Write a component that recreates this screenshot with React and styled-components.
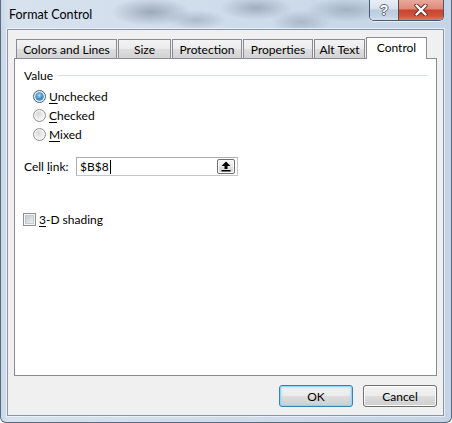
import React from "react";
import styled, { createGlobalStyle } from "styled-components";

const GlobalStyle = createGlobalStyle`
  html, body {
    margin: 0;
    padding: 0;
  }
  body {
    width: 452px;
    height: 423px;
    overflow: hidden;
    background: #ffffff;
    font-family: Lato, "Liberation Sans", sans-serif;
    font-size: 12px;
    color: #000000;
  }
`;

const Window = styled.div`
  box-sizing: border-box;
  width: 452px;
  height: 423px;
  display: flex;
  flex-direction: column;
  padding: 0 7px 6px 6px;
  border: 1px solid #5a6b80;
  border-top: none;
  border-radius: 0 0 6px 6px;
  background:
    radial-gradient(ellipse 40px 14px at 150px 12px, rgba(90, 105, 125, 0.45), transparent),
    radial-gradient(ellipse 30px 10px at 195px 20px, rgba(90, 105, 125, 0.3), transparent),
    radial-gradient(ellipse 36px 12px at 255px 8px, rgba(90, 105, 125, 0.4), transparent),
    radial-gradient(ellipse 30px 12px at 300px 22px, rgba(90, 105, 125, 0.3), transparent),
    radial-gradient(ellipse 40px 12px at 345px 10px, rgba(90, 105, 125, 0.35), transparent),
    linear-gradient(to right, #c9d7e7 0, #d7e2ee 8px, #cddbea 60%, #c4d4e6 100%);
`;

const TitleBar = styled.div`
  height: 29px;
  flex: none;
  display: flex;
  align-items: flex-start;
`;

const Title = styled.div`
  padding: 7px 0 0 2px;
  font-size: 12.5px;
  line-height: 15px;
  color: #000000;
`;

const CaptionGroup = styled.div`
  margin-left: auto;
  display: flex;
  height: 20px;
  border: 1px solid #4a5a6e;
  border-top: none;
  border-radius: 0 0 5px 5px;
  overflow: hidden;
  box-shadow: 0 1px 0 rgba(255, 255, 255, 0.6);
`;

const CaptionButton = styled.div`
  width: ${(p) => p.width}px;
  height: 20px;
  display: flex;
  align-items: center;
  justify-content: center;
  box-sizing: border-box;
  border-left: ${(p) => (p.first ? "none" : "1px solid #5b4848")};
  background: ${(p) =>
    p.danger
      ? "linear-gradient(to bottom, #e9a99b 0%, #dd8a78 45%, #c8432d 50%, #d0553c 80%, #e07a5c 100%)"
      : "linear-gradient(to bottom, #e8eef6 0%, #d7e1ed 45%, #bccbdc 50%, #c3d3e4 80%, #d3e0ee 100%)"};
  font-family: "Liberation Sans", sans-serif;
  font-weight: bold;
  font-size: 14px;
  color: #ffffff;
  text-shadow: -1px 0 #5d6b7a, 1px 0 #5d6b7a, 0 -1px #5d6b7a, 0 1px #5d6b7a;
`;

const Client = styled.div`
  flex: 1;
  box-sizing: border-box;
  display: flex;
  flex-direction: column;
  padding: 7px 6px 8px 6px;
  background: #f0f0f0;
  border: 1px solid #8796a9;
  box-shadow: 0 0 0 1px rgba(255, 255, 255, 0.55);
`;

const TabStrip = styled.div`
  height: 22px;
  margin-bottom: -1px;
  padding-left: 2px;
  display: flex;
  align-items: flex-end;
  position: relative;
  z-index: 1;
`;

const Tab = styled.div`
  box-sizing: border-box;
  width: ${(p) => p.width}px;
  height: ${(p) => (p.active ? 22 : 20)}px;
  margin-right: 1px;
  display: flex;
  align-items: center;
  justify-content: center;
  border: 1px solid #898c95;
  border-bottom: ${(p) => (p.active ? "none" : "1px solid #898c95")};
  background: ${(p) =>
    p.active
      ? "#ffffff"
      : "linear-gradient(to bottom, #f3f3f3 0%, #ebebeb 50%, #dedede 51%, #d3d3d3 100%)"};
  padding-bottom: ${(p) => (p.active ? 2 : 0)}px;
  white-space: nowrap;
`;

const Panel = styled.div`
  box-sizing: border-box;
  height: 318px;
  flex: none;
  background: #ffffff;
  border: 1px solid #898c95;
  padding: 8px 8px 0 8px;
  display: flex;
  flex-direction: column;
`;

const GroupHeader = styled.div`
  height: 16px;
  padding-left: 1px;
  display: flex;
  align-items: center;
  gap: 5px;
`;

const GroupLine = styled.div`
  flex: 1;
  height: 1px;
  margin-top: 1px;
  background: #d5dfe5;
`;

const RadioList = styled.div`
  margin-top: 4px;
  padding-left: 10px;
  display: flex;
  flex-direction: column;
`;

const OptionRow = styled.div`
  height: 19px;
  display: flex;
  align-items: center;
`;

const Radio = styled.span`
  box-sizing: border-box;
  width: 13px;
  height: 13px;
  flex: none;
  border-radius: 50%;
  border: 1px solid ${(p) => (p.checked ? "#2c628b" : "#8f8f8f")};
  background: radial-gradient(circle at 40% 35%, #d9d9d9 0%, #ececec 45%, #fbfbfb 100%);
  box-shadow: inset 0 0 0 1px #f6f6f6;
  display: flex;
  align-items: center;
  justify-content: center;

  &::after {
    content: "";
    display: ${(p) => (p.checked ? "block" : "none")};
    width: 7px;
    height: 7px;
    border-radius: 50%;
    background: radial-gradient(circle at 45% 35%, #bfe6fb 0%, #4aa3df 40%, #1c5f9c 100%);
    box-shadow: 0 0 0 0.5px #1f4f7a;
  }
`;

const OptionLabel = styled.span`
  margin-left: ${(p) => p.gap}px;
  line-height: 15px;
`;

const Key = styled.span`
  text-decoration: underline;
  text-underline-offset: 2px;
`;

const LinkRow = styled.div`
  margin-top: 13px;
  height: 19px;
  padding-left: 1px;
  display: flex;
  align-items: center;
`;

const FieldLabel = styled.span`
  width: 52px;
  flex: none;
`;

const TextBox = styled.div`
  box-sizing: border-box;
  width: 162px;
  height: 19px;
  border: 1px solid #abadb3;
  border-right-color: #c3c6cc;
  border-bottom-color: #c3c6cc;
  background: #ffffff;
  display: flex;
  align-items: center;
  padding: 0 2px 0 3px;
`;

const Caret = styled.span`
  display: inline-block;
  width: 1px;
  height: 14px;
  margin-left: 1px;
  background: #000000;
`;

const PickButton = styled.div`
  margin-left: auto;
  box-sizing: border-box;
  width: 18px;
  height: 15px;
  border: 1px solid #707070;
  border-radius: 2px;
  background: linear-gradient(to bottom, #f6f6f6 0%, #ececec 50%, #dfdfdf 51%, #d6d6d6 100%);
  box-shadow: inset 0 0 0 1px #fbfbfb;
  display: flex;
  align-items: center;
  justify-content: center;
`;

const CheckRow = styled.div`
  margin-top: 36px;
  height: 15px;
  display: flex;
  align-items: center;
`;

const CheckBox = styled.span`
  box-sizing: border-box;
  width: 13px;
  height: 13px;
  flex: none;
  border: 1px solid #8e8f8f;
  background: linear-gradient(135deg, #b9bdc2 0%, #dcdfe2 55%, #f4f4f4 100%);
  box-shadow: inset 0 0 0 1px #f4f4f4, inset 0 0 0 2px #c7cacd;
`;

const Footer = styled.div`
  margin-top: 9px;
  display: flex;
  justify-content: flex-end;
  gap: 10px;
`;

const Button = styled.div`
  box-sizing: border-box;
  width: 74px;
  height: 22px;
  border-radius: 3px;
  border: 1px solid ${(p) => (p.primary ? "#3c7fb1" : "#707070")};
  background: linear-gradient(to bottom, #f2f2f2 0%, #ebebeb 50%, #dddddd 51%, #cfcfcf 100%);
  box-shadow: ${(p) =>
    p.primary
      ? "inset 0 0 0 1px #8fd6f6, inset 0 0 2px 2px rgba(150, 220, 250, 0.45)"
      : "inset 0 0 0 1px #fcfcfc"};
  display: flex;
  align-items: center;
  justify-content: center;
`;

const tabs = [
  { label: "Colors and Lines", width: 101 },
  { label: "Size", width: 53 },
  { label: "Protection", width: 70 },
  { label: "Properties", width: 70 },
  { label: "Alt Text", width: 51 },
  { label: "Control", width: 61, active: true },
];

const options = [
  { key: "U", rest: "nchecked", checked: true },
  { key: "C", rest: "hecked" },
  { key: "M", rest: "ixed" },
];

const UpArrow = () => (
  <svg width="10" height="11" viewBox="0 0 10 11">
    <path d="M5 0.5 L9.5 5 L6.5 5 L6.5 8 L3.5 8 L3.5 5 L0.5 5 Z" fill="#000" />
    <rect x="0.5" y="9" width="9" height="1.5" fill="#000" />
  </svg>
);

const CloseGlyph = () => (
  <svg width="14" height="12" viewBox="0 0 14 12">
    <path
      d="M2.5 1.5 L11.5 10.5 M11.5 1.5 L2.5 10.5"
      stroke="#6b2b22"
      strokeWidth="4.2"
      strokeLinecap="round"
    />
    <path
      d="M2.5 1.5 L11.5 10.5 M11.5 1.5 L2.5 10.5"
      stroke="#ffffff"
      strokeWidth="2.4"
      strokeLinecap="round"
    />
  </svg>
);

const App = () => {
  return (
    <Window>
      <GlobalStyle />
      <TitleBar>
        <Title>Format Control</Title>
        <CaptionGroup>
          <CaptionButton width={28} first>
            ?
          </CaptionButton>
          <CaptionButton width={45} danger>
            <CloseGlyph />
          </CaptionButton>
        </CaptionGroup>
      </TitleBar>
      <Client>
        <TabStrip>
          {tabs.map((t) => (
            <Tab key={t.label} width={t.width} active={t.active}>
              {t.label}
            </Tab>
          ))}
        </TabStrip>
        <Panel>
          <GroupHeader>
            <span>Value</span>
            <GroupLine />
          </GroupHeader>
          <RadioList>
            {options.map((o) => (
              <OptionRow key={o.key}>
                <Radio checked={o.checked} />
                <OptionLabel gap={3}>
                  <Key>{o.key}</Key>
                  {o.rest}
                </OptionLabel>
              </OptionRow>
            ))}
          </RadioList>
          <LinkRow>
            <FieldLabel>
              Cell <Key>l</Key>ink:
            </FieldLabel>
            <TextBox>
              <span>$B$8</span>
              <Caret />
              <PickButton>
                <UpArrow />
              </PickButton>
            </TextBox>
          </LinkRow>
          <CheckRow>
            <CheckBox />
            <OptionLabel gap={3}>
              <Key>3</Key>-D shading
            </OptionLabel>
          </CheckRow>
        </Panel>
        <Footer>
          <Button primary>OK</Button>
          <Button>Cancel</Button>
        </Footer>
      </Client>
    </Window>
  );
};

export default App;
